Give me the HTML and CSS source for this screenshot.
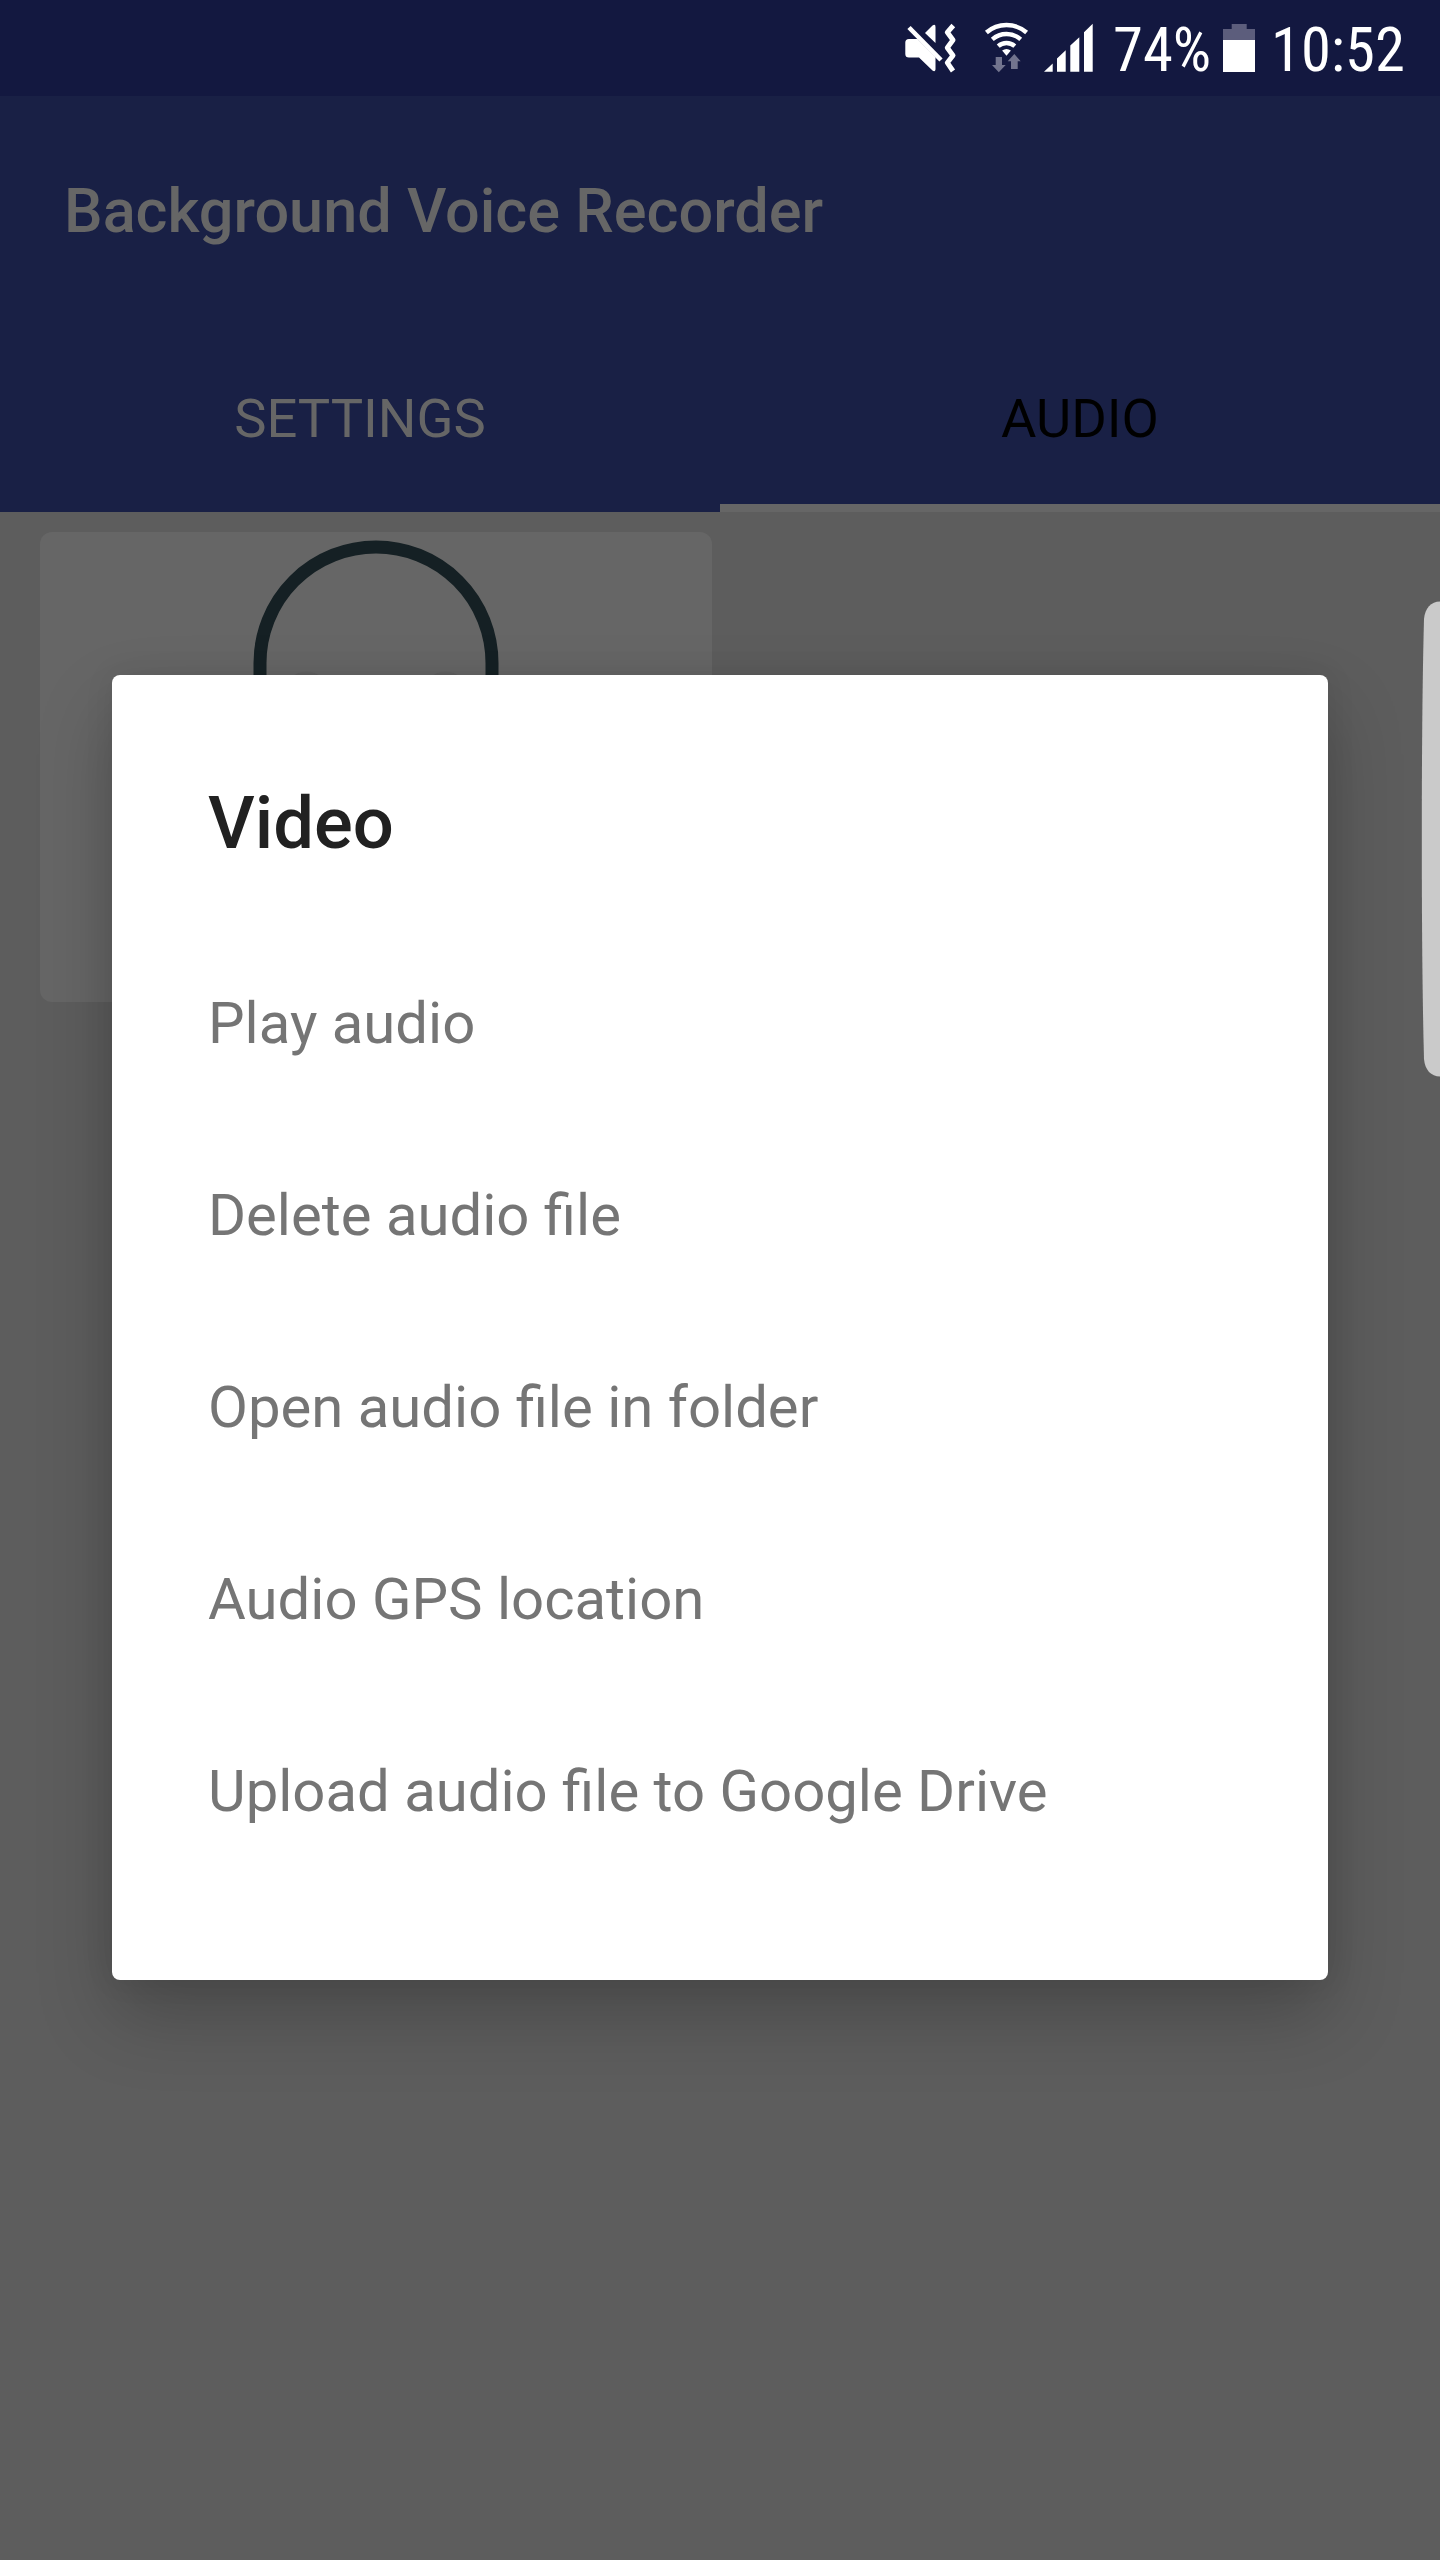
FILE: index.html
```
<!DOCTYPE html>
<html lang="en">
<head>
<meta charset="utf-8">
<title>Background Voice Recorder</title>
<link rel="stylesheet" href="styles.css">
</head>
<body>
<div class="screen">
  <div class="status-bar">
    <svg class="icon-mute" viewBox="904 20 54 56" aria-hidden="true">
      <path d="M909 39H917.5L935.5 57V69.5Q935 72.500 932.500 70.500L919 57.500H909Q905.300 57.500 905.300 54V42.500Q905.300 39 909 39Z"/>
      <path d="M925 33L932.500 25.500Q935.500 23.500 935.500 27V43Z"/>
      <path class="line slash" d="M909 27.500L941 60"/>
      <path class="line wave" d="M953.300 25.500L947.300 32.300L953 40L947.300 47.700L953 55.500L947.300 62.700L953 71"/>
    </svg>
    <svg class="icon-wifi" viewBox="984 20 46 56" aria-hidden="true">
      <path class="line arc" d="M986.400 32.500A30.700 30.700 0 0 1 1026.600 32.500M992.300 39.300A21.700 21.700 0 0 1 1020.700 39.300M998.200 46.100A12.700 12.700 0 0 1 1014.800 46.100"/>
      <path d="M1006.500 55.700L1002.100 50.600Q1006.500 47.200 1010.900 50.600Z"/>
      <path class="dim" d="M995.700 57H1002V65H1005.700L998.800 72.300L992 65H995.700ZM1014.300 54L1020.700 61.300H1017.700V69H1011V61.300H1007.700Z"/>
    </svg>
    <svg class="icon-signal" viewBox="1044 20 50 56" aria-hidden="true">
      <path d="M1044 71.700L1052.700 63.500V71.700ZM1057 71.700V58.500L1065.700 50.300V71.700ZM1070.300 71.700V45.500L1079.300 37.300V71.700ZM1084 71.700V32.300L1092.700 23.700V71.700Z"/>
    </svg>
    <span class="battery-level">74%</span>
    <svg class="icon-battery" viewBox="1222 20 34 56" aria-hidden="true">
      <path class="empty" d="M1231.700 24H1246.700V29H1255V40H1223V29H1231.700Z"/>
      <path d="M1223 40H1255V72H1223Z"/>
    </svg>
    <span class="clock">10:52</span>
  </div>
  <header class="toolbar"><h1 class="app-title">Background Voice Recorder</h1></header>
  <nav class="tabs">
    <div class="tab">SETTINGS</div>
    <div class="tab tab-active">AUDIO</div>
  </nav>
  <main class="content">
    <div class="card">
      <svg class="headphones" viewBox="0 0 260 260" aria-hidden="true">
        <circle class="cup" cx="60.500" cy="162.500" r="23"/>
        <circle class="cup" cx="199.500" cy="162.500" r="23"/>
        <path class="band" d="M14 190V131A116 116 0 0 1 246 131V190"/>
      </svg>
    </div>
  </main>
  <div class="dialog" role="dialog">
    <h2 class="dialog-title">Video</h2>
    <ul class="options">
      <li class="option">Play audio</li>
      <li class="option">Delete audio file</li>
      <li class="option">Open audio file in folder</li>
      <li class="option">Audio GPS location</li>
      <li class="option">Upload audio file to Google Drive</li>
    </ul>
  </div>
  <svg class="edge-handle" viewBox="0 0 20 476" aria-hidden="true">
    <path d="M20 .5C11 .5 5 7 4 18Q1.800 100 1.800 238T4 458C5 469 11 475.500 20 475.500Z"/>
  </svg>
</div>
</body>
</html>
```
FILE: styles.css
```
* { box-sizing: border-box; }

body {
  margin: 0;
  font-family: Roboto, "Liberation Sans", sans-serif;
}

h1, h2, ul { margin: 0; padding: 0; }

.screen {
  position: relative;
  display: flex;
  flex-direction: column;
  width: 1440px;
  height: 2560px;
  overflow: hidden;
  background: #5d5d5d;
}

/* Status bar */
.status-bar {
  display: flex;
  align-items: center;
  height: 96px;
  padding-left: 904px;
  background: #131840;
  color: #fff;
  font: 400 60.6px/90px "Roboto Condensed", Roboto, sans-serif;
}
.status-bar svg { flex: none; height: 56px; fill: #fff; }
.status-bar .line { fill: none; stroke: #fff; }
.status-bar .slash { stroke-width: 4.6px; }
.status-bar .wave { stroke-width: 5px; stroke-linejoin: round; }
.status-bar .arc { stroke-width: 4.4px; }
.status-bar .dim { fill: #72748e; }
.status-bar .empty { fill: #5c5d7c; }
.icon-mute { width: 54px; }
.icon-wifi { width: 46px; margin-left: 26px; }
.icon-signal { width: 50px; margin-left: 14px; }
.battery-level { width: 109px; margin-left: 19px; padding-top: 6px; }
.icon-battery { width: 34px; }
.clock { margin-left: 15px; padding-top: 6px; }

/* App bar and tabs */
.toolbar {
  display: flex;
  align-items: center;
  height: 224px;
  padding: 5px 64px 0;
  background: #192045;
}
.app-title {
  color: #666;
  font-size: 61.2px;
  font-weight: 500;
  line-height: 72px;
}
.tabs {
  display: grid;
  grid-template-columns: 1fr 1fr;
  height: 192px;
  background: #192045;
}
.tab {
  height: 192px;
  padding-top: 8px;
  border-bottom: 8px solid transparent;
  color: #666;
  font-size: 54.3px;
  line-height: 182px;
  text-align: center;
}
.tab-active { border-bottom-color: #666; color: #000; }

/* Recordings */
.content { flex: 1; padding: 20px 40px; }
.card {
  display: flex;
  justify-content: center;
  width: 672px;
  height: 470px;
  border-radius: 12px;
  background: #666;
}
.headphones { width: 260px; height: 260px; }
.cup { fill: #606060; }
.band { fill: none; stroke: #152024; stroke-width: 13px; }

/* Options dialog */
.dialog {
  position: absolute;
  top: 675px;
  left: 112px;
  width: 1216px;
  height: 1305px;
  padding: 101px 96px 0;
  border-radius: 8px;
  background: #fff;
  box-shadow: 0 36px 76px rgba(0, 0, 0, .22), 0 0 30px rgba(0, 0, 0, .08);
}
.dialog-title {
  padding-bottom: 55px;
  color: #212121;
  font-size: 72.4px;
  font-weight: 500;
  line-height: 96px;
}
.options { list-style: none; }
.option {
  height: 192px;
  color: #757575;
  font-size: 58.05px;
  line-height: 192px;
}

/* Edge panel handle */
.edge-handle {
  position: absolute;
  top: 601px;
  right: 0;
  width: 20px;
  height: 476px;
  fill: #cacaca;
}
```
